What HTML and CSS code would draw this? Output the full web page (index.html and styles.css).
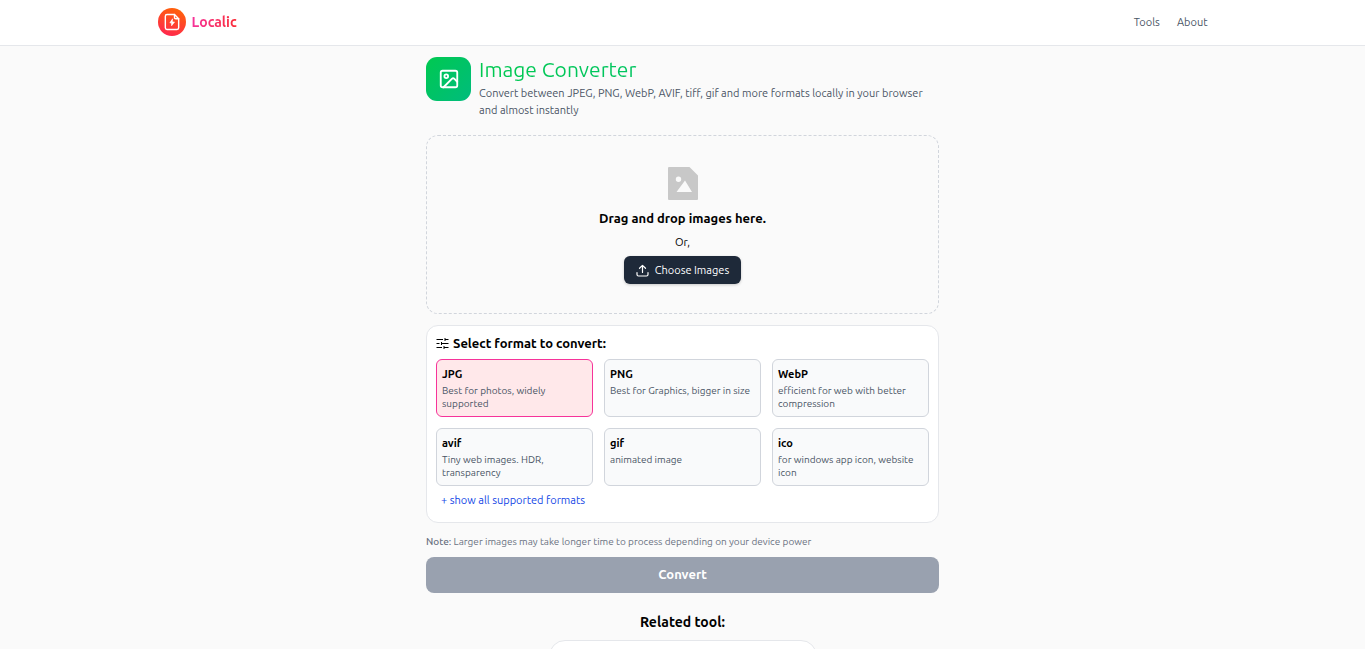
FILE: index.html
```html
<!DOCTYPE html>
<html lang="en">

<head>
    <meta charset="UTF-8">
    <meta name="viewport" content="width=device-width, initial-scale=1.0">
    <title>Image Converter - Localic</title>
    <link rel="stylesheet" href="styles.css">
</head>

<body>
    <header class="site-header">
        <div class="header-inner">
            <a href="#" class="brand">
                <span class="brand-logo">
                    <svg viewBox="0 0 24 24" width="20" height="20" fill="none" stroke="#fff" stroke-width="1.7" stroke-linejoin="round" stroke-linecap="round">
                        <path d="M15 3H6A2 2 0 0 0 4 5v14a2 2 0 0 0 2 2h12a2 2 0 0 0 2-2V8z" />
                        <path d="M15 3v3.500A1.500 1.500 0 0 0 16.500 8H20" />
                        <path d="M12.500 8.500L9.500 13h2v3.500l3.500-4.500h-2.500z" fill="#fff" stroke-width="0.800" />
                    </svg>
                </span>
                <span class="brand-name">Localic</span>
            </a>
            <nav class="site-nav">
                <a href="#">Tools</a>
                <a href="#">About</a>
            </nav>
        </div>
    </header>

    <main class="container">
        <div class="tool-head">
            <div class="tool-icon">
                <svg viewBox="0 0 24 24" width="22" height="22" fill="none" stroke="#fff" stroke-width="2" stroke-linecap="round" stroke-linejoin="round">
                    <rect x="3" y="3" width="18" height="18" rx="2" />
                    <circle cx="9" cy="9" r="2" />
                    <path d="M21 15l-3.086-3.086a2 2 0 0 0-2.828 0L6 21" />
                </svg>
            </div>
            <div class="tool-text">
                <h1>Image Converter</h1>
                <p>Convert between JPEG, PNG, WebP, AVIF, tiff, gif and more formats locally in your browser and almost instantly</p>
            </div>
        </div>

        <section class="dropzone">
            <svg class="drop-icon" viewBox="0 0 30 33" width="30" height="33">
                <path fill="#c8c8c8" fill-rule="evenodd" d="M1 0h20.500L30 8.500V32a1 1 0 0 1-1 1H1a1 1 0 0 1-1-1V1a1 1 0 0 1 1-1zM10.500 9.500a2.700 2.700 0 1 0 0 5.400a2.700 2.700 0 0 0 0-5.400zM17 13.500L8.500 25H24z" />
            </svg>
            <h2>Drag and drop images here.</h2>
            <p>Or,</p>
            <button type="button" class="choose-btn">
                <svg viewBox="0 0 13 13" width="13" height="13" fill="none" stroke="currentColor" stroke-width="1.200" stroke-linecap="round" stroke-linejoin="round">
                    <path d="M6.500 8.500V1.500M3.500 4.300l3-2.900l3 2.900M1 8.500v2A1.500 1.500 0 0 0 2.500 12h8a1.500 1.500 0 0 0 1.500-1.500v-2" />
                </svg>
                Choose Images
            </button>
        </section>

        <section class="formats">
            <h2>
                <svg viewBox="0 0 13 13" width="13" height="13" fill="none" stroke="currentColor" stroke-width="1">
                    <path d="M0.500 2.500h6.500M9 2.500h3.500M9 1v3M0.500 6.500h3M5.500 6.500h7M5.500 5v3M0.500 10.500h5.500M8 10.500h4.500M8 9v3" />
                </svg>
                Select format to convert:
            </h2>
            <div class="format-grid">
                <label class="format">
                    <input type="radio" name="format" value="jpg" checked>
                    <strong>JPG</strong>
                    <span>Best for photos, widely supported</span>
                </label>
                <label class="format">
                    <input type="radio" name="format" value="png">
                    <strong>PNG</strong>
                    <span>Best for Graphics, bigger in size</span>
                </label>
                <label class="format">
                    <input type="radio" name="format" value="webp">
                    <strong>WebP</strong>
                    <span>efficient for web with better compression</span>
                </label>
                <label class="format">
                    <input type="radio" name="format" value="avif">
                    <strong>avif</strong>
                    <span>Tiny web images. HDR, transparency</span>
                </label>
                <label class="format">
                    <input type="radio" name="format" value="gif">
                    <strong>gif</strong>
                    <span>animated image</span>
                </label>
                <label class="format">
                    <input type="radio" name="format" value="ico">
                    <strong>ico</strong>
                    <span>for windows app icon, website icon</span>
                </label>
            </div>
            <button type="button" class="show-all">+ show all supported formats</button>
        </section>

        <p class="note"><b>Note:</b> Larger images may take longer time to process depending on your device power</p>
        <button type="button" class="convert-btn" disabled>Convert</button>

        <h2 class="related-title">Related tool:</h2>
        <div class="related-card"></div>
    </main>
</body>

</html>
```
FILE: styles.css
```css
* {
    box-sizing: border-box;
    margin: 0;
}

html {
    scrollbar-width: none;
}

body {
    font-family: Ubuntu, "Noto Sans", sans-serif;
    font-size: 11px;
    line-height: 17px;
    background-color: #fafafa;
    color: #000;
}

a {
    text-decoration: none;
}

button {
    font-family: inherit;
    border: none;
    cursor: pointer;
}

svg {
    display: block;
    flex-shrink: 0;
}

.site-header {
    background-color: #fff;
    border-bottom: 1px solid #e5e7eb;
    padding: 0 24px 1px;
}

.header-inner {
    max-width: 1050px;
    height: 44px;
    margin: 0 auto;
    display: flex;
    justify-content: space-between;
    align-items: center;
}

.brand {
    display: flex;
    align-items: center;
    gap: 6px;
}

.brand-logo {
    width: 28px;
    height: 28px;
    border-radius: 50%;
    display: flex;
    align-items: center;
    justify-content: center;
    background: linear-gradient(20deg, #ff2056, #ff6900);
}

.brand-name {
    font-size: 14px;
    font-weight: bold;
    background: linear-gradient(to right, #f6339a, #fb2c36);
    background-clip: text;
    -webkit-background-clip: text;
    color: transparent;
}

.site-nav {
    display: flex;
    gap: 17px;
}

.site-nav a {
    color: #4a5565;
}

.container {
    max-width: 513px;
    margin: 0 auto;
    padding-top: 11px;
}

.tool-head {
    display: flex;
    gap: 8px;
    margin-bottom: 16px;
}

.tool-icon {
    width: 45px;
    height: 44px;
    border-radius: 11px;
    display: flex;
    align-items: center;
    justify-content: center;
    flex-shrink: 0;
    background: linear-gradient(to bottom right, #00c950, #00bc7d);
}

.tool-text {
    flex: 1;
}

.tool-text h1 {
    font-size: 21px;
    font-weight: normal;
    line-height: 24px;
    margin-bottom: 4px;
    background: linear-gradient(to right, #00c950, #00bc7d);
    background-clip: text;
    -webkit-background-clip: text;
    color: transparent;
}

.tool-text p {
    color: #4a5565;
}

.dropzone {
    border: 1px dashed #d1d5dc;
    border-radius: 12px;
    padding: 31px 12px 29px;
    display: flex;
    flex-direction: column;
    align-items: center;
    margin-bottom: 11px;
}

.drop-icon {
    margin-bottom: 10px;
}

.dropzone h2,
.formats h2 {
    font-size: 13px;
    line-height: 17px;
}

.dropzone p {
    margin: 7px 0 5px;
}

.choose-btn {
    display: flex;
    align-items: center;
    gap: 6px;
    height: 28px;
    padding: 0 12px;
    border-radius: 6px;
    font-size: 11px;
    color: #fff;
    background-color: #1e2939;
    box-shadow: 0 1px 3px rgba(0, 0, 0, 0.2);
}

.formats {
    background-color: #fff;
    border: 1px solid #e5e7eb;
    border-radius: 12px;
    padding: 9px 9px 13px;
    margin-bottom: 11px;
}

.formats h2 {
    display: flex;
    align-items: center;
    gap: 4px;
    margin-bottom: 7px;
}

.format-grid {
    display: grid;
    grid-template-columns: repeat(3, 1fr);
    gap: 11px;
}

.format {
    position: relative;
    min-height: 58px;
    padding: 5px;
    border: 1px solid #d1d5dc;
    border-radius: 6px;
    background-color: #f9fafb;
    cursor: pointer;
}

.format input {
    position: absolute;
    opacity: 0;
}

.format strong {
    display: block;
    line-height: 19px;
}

.format span {
    display: block;
    font-size: 10px;
    line-height: 13px;
    color: #4a5565;
}

.format:has(input:checked) {
    background-color: #ffe8ea;
    border-color: #f6339a;
}

.show-all {
    display: block;
    padding: 0;
    margin: 6px 0 0 5px;
    font-size: 11px;
    line-height: 17px;
    background: none;
    color: #1447e6;
}

.note {
    font-size: 10px;
    line-height: 15px;
    color: #6a7282;
    margin-bottom: 8px;
}

.note b {
    font-weight: 500;
}

.convert-btn {
    display: block;
    width: 100%;
    height: 36px;
    padding-bottom: 3px;
    border-radius: 8px;
    font-size: 13px;
    font-weight: bold;
    color: #fff;
    background-color: #99a1af;
    cursor: not-allowed;
}

.related-title {
    text-align: center;
    font-size: 14px;
    line-height: 20px;
    margin: 19px 0 8px;
}

.related-card {
    width: 268px;
    height: 120px;
    margin: 0 auto;
    background-color: #fff;
    border: 1px solid #e5e7eb;
    border-radius: 16px;
}
```
